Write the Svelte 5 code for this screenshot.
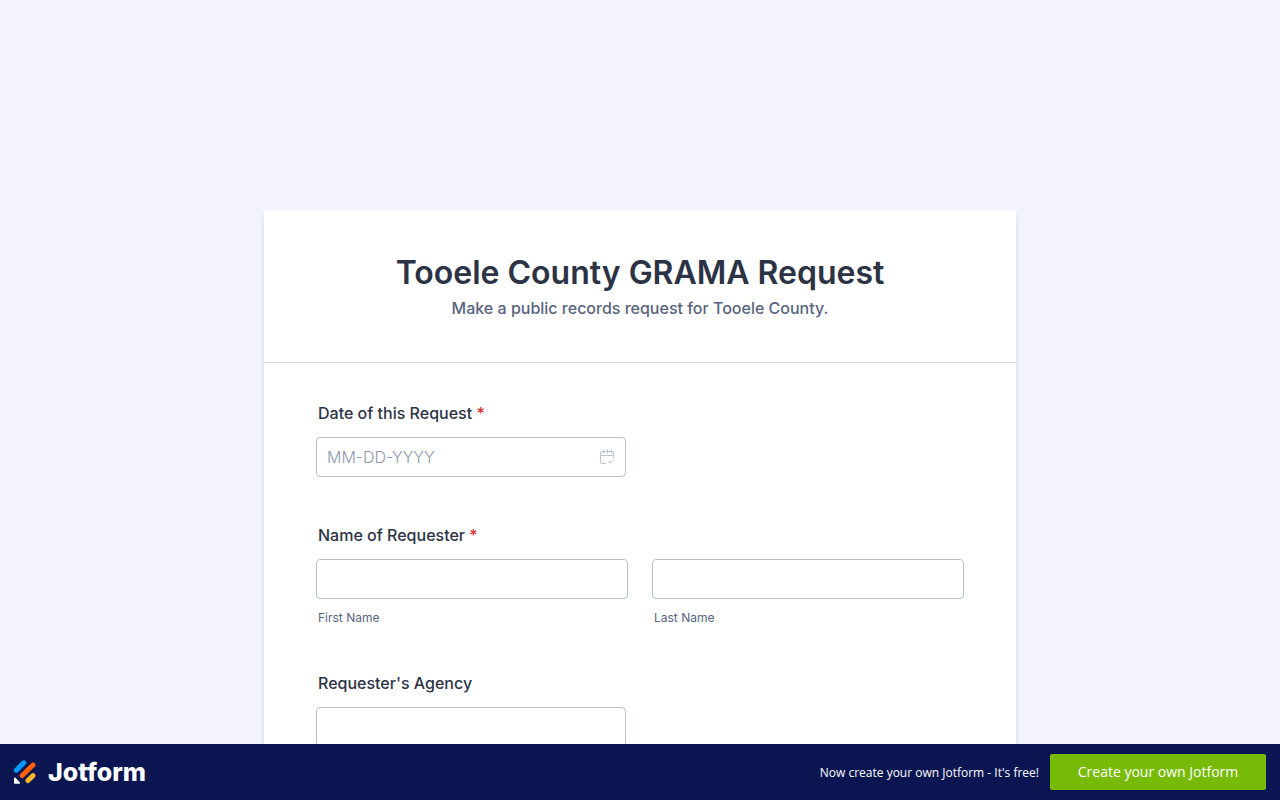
<script>
  let date = $state('');
  let firstName = $state('');
  let lastName = $state('');
  let agency = $state('');
</script>

<main class="page">
  <form class="card">
    <header class="card-header">
      <h1>Tooele County GRAMA Request</h1>
      <p>Make a public records request for Tooele County.</p>
    </header>

    <div class="fields">
      <div class="field">
        <label class="label" for="date">Date of this Request <span class="required">*</span></label>
        <div class="control half">
          <input id="date" type="text" placeholder="MM-DD-YYYY" required bind:value={date} />
          <svg class="calendar" viewBox="0 0 16 16" aria-hidden="true">
            <path d="M6.500 14.500H3a1.500 1.500 0 0 1-1.500-1.500V4A1.500 1.500 0 0 1 3 2.500h10A1.500 1.500 0 0 1 14.500 4v5M1.500 6.500h13M4.500 1v3M8.500 1v3M12.500 1v3M9.500 12.500l1.500 1.500 3.500-3" />
          </svg>
        </div>
      </div>

      <fieldset class="field">
        <legend class="label">Name of Requester <span class="required">*</span></legend>
        <div class="names">
          <div>
            <input id="first" type="text" required bind:value={firstName} />
            <label class="sublabel" for="first">First Name</label>
          </div>
          <div>
            <input id="last" type="text" required bind:value={lastName} />
            <label class="sublabel" for="last">Last Name</label>
          </div>
        </div>
      </fieldset>

      <div class="field">
        <label class="label" for="agency">Requester's Agency</label>
        <div class="control half">
          <input id="agency" type="text" bind:value={agency} />
        </div>
      </div>
    </div>
  </form>
</main>

<footer class="bar">
  <a class="brand" href="#home">
    <svg class="mark" viewBox="0 1 24 26" aria-hidden="true">
      <g fill="none" stroke-width="5" stroke-linecap="round">
        <path stroke="#0099ff" d="M4.300 12.200 11.800 4.800" />
        <path stroke="#ff6100" d="M10.200 17.500 21 7" />
        <path stroke="#ffb629" d="M15.900 22.500 21 17.600" />
      </g>
      <path fill="#fff" d="M2 20.400c0-.8.900-1.200 1.500-.6l4.300 4.400c.6.600.2 1.600-.7 1.600H3c-.6 0-1-.4-1-1z" />
    </svg>
    <span>Jotform</span>
  </a>
  <div class="promo">
    <span>Now create your own Jotform - It's free!</span>
    <a class="cta" href="#create">Create your own Jotform</a>
  </div>
</footer>

<style>
  :global(body) {
    background: #f3f3fe;
    font-family: Inter, sans-serif;
    color: #2c3345;
  }
  .page {
    padding: 210px 16px 96px;
  }
  .card {
    max-width: 752px;
    margin: 0 auto;
    background: #fff;
    border-radius: 4px;
    box-shadow: 0 4px 4px rgba(87, 100, 126, 0.21);
  }
  .card-header {
    padding: 40px 52px;
    border-bottom: 1px solid #d7d8db;
    text-align: center;
  }
  h1 {
    margin: 0;
    font-size: 32px;
    line-height: 46px;
    font-weight: 600;
  }
  .card-header p {
    margin: 0;
    padding-bottom: 1px;
    font-size: 16px;
    line-height: 25px;
    font-weight: 500;
    color: #57647e;
  }
  .fields {
    display: flex;
    flex-direction: column;
    gap: 48px;
    padding: 40px 52px 48px;
  }
  .field {
    min-width: 0;
    margin: 0;
    padding: 0;
    border: 0;
  }
  .label {
    display: block;
    padding: 0 2px;
    margin-bottom: 14px;
    font-size: 16px;
    line-height: 20px;
    font-weight: 500;
  }
  .required {
    color: #d92d2d;
  }
  .control {
    position: relative;
  }
  .half {
    max-width: 310px;
  }
  input {
    display: block;
    box-sizing: border-box;
    width: 100%;
    height: 40px;
    padding: 0 10px;
    border: 1px solid #b8bcc4;
    border-radius: 4px;
    background: #fff;
    color: #2c3345;
    font: 16px Inter, sans-serif;
  }
  input::placeholder {
    color: #8d98ab;
    font-weight: 300;
    opacity: 1;
  }
  .calendar {
    position: absolute;
    top: 12px;
    right: 11px;
    width: 16px;
    height: 16px;
    fill: none;
    stroke: #bcc5d0;
    stroke-linecap: round;
    stroke-linejoin: round;
  }
  .names {
    display: grid;
    grid-template-columns: 1fr 1fr;
    gap: 24px;
  }
  .sublabel {
    display: block;
    padding: 12px 2px 0;
    font-size: 12px;
    line-height: 14px;
    color: #57647e;
  }
  .bar {
    position: fixed;
    right: 0;
    bottom: 0;
    left: 0;
    display: flex;
    align-items: center;
    justify-content: space-between;
    min-height: 56px;
    box-sizing: border-box;
    padding: 0 14px 0 12px;
    background: #0a1551;
    color: #fff;
    font-family: "Open Sans", sans-serif;
  }
  .bar a {
    color: #fff;
    text-decoration: none;
  }
  .brand {
    display: flex;
    align-items: center;
    gap: 12px;
    font: 800 25px/30px Inter, sans-serif;
  }
  .mark {
    width: 24px;
    height: 26px;
  }
  .promo {
    display: flex;
    align-items: center;
    gap: 11px;
    font-size: 12px;
  }
  .cta {
    box-sizing: border-box;
    min-width: 216px;
    padding: 0 16px;
    border-radius: 2px;
    background: #78bb07;
    font-size: 14px;
    line-height: 36px;
    text-align: center;
  }
</style>
